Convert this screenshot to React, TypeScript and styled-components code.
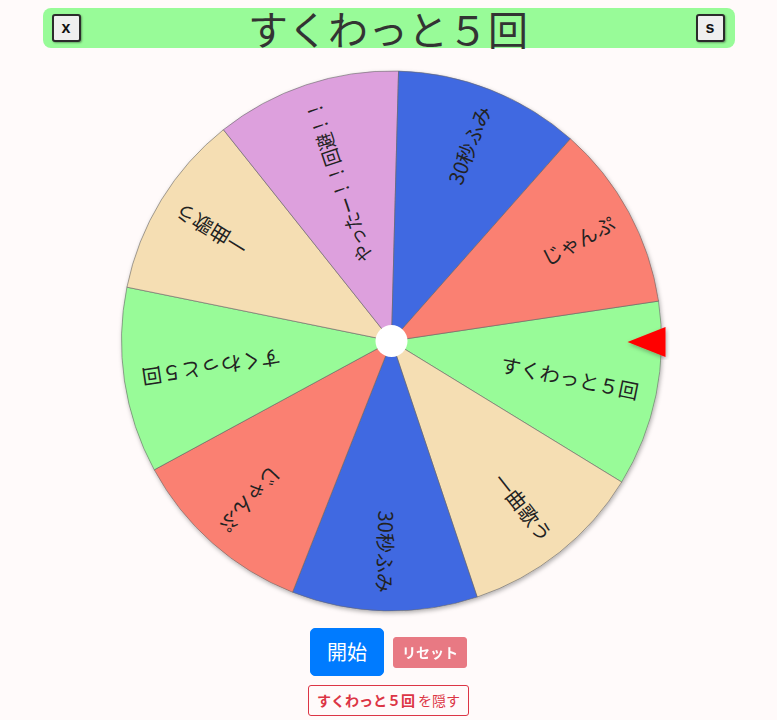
import React from "react";
import styled, { createGlobalStyle } from "styled-components";

const GlobalStyle = createGlobalStyle`
  body {
    margin: 8px;
    background: #fffafa;
    font-family: "Noto Sans CJK JP", "Noto Sans", sans-serif;
  }
`;

const Page = styled.div`
  display: flex;
  flex-direction: column;
  align-items: center;
`;

const Header = styled.header`
  width: 692px;
  height: 40px;
  box-sizing: border-box;
  padding: 0 10px 0 9px;
  background: #98fb98;
  border-radius: 8px;
  display: flex;
  align-items: center;
  justify-content: space-between;
`;

const Title = styled.h1`
  margin: 0;
  font-size: 40px;
  line-height: 40px;
  font-weight: 400;
  color: #333;
`;

const KeyButton = styled.button`
  width: 29px;
  height: 28px;
  padding: 0;
  border: 2px solid #2b2b2b;
  border-radius: 3px;
  background: #efefef;
  box-shadow: 1px 1px 2px rgba(0, 0, 0, 0.35);
  font-family: "Liberation Sans", sans-serif;
  font-weight: 700;
  font-size: 16px;
  color: #111;
`;

const WheelSvg = styled.svg`
  display: block;
  margin-top: 13px;
`;

const Controls = styled.div`
  margin-top: 7px;
  display: flex;
  flex-direction: column;
  align-items: center;
  gap: 9px;
`;

const Row = styled.div`
  display: flex;
  align-items: center;
  gap: 9px;
`;

const StartButton = styled.button`
  font-family: inherit;
  font-size: 20px;
  line-height: 1.5;
  padding: 8px 16px;
  border: 1px solid #007bff;
  border-radius: 5px;
  background: #007bff;
  color: #fff;
`;

const SmallButton = styled.button<{ $outline?: boolean }>`
  font-family: inherit;
  font-size: 14px;
  line-height: 1.5;
  padding: 4px 8px;
  border-radius: 3px;
  border: 1px solid #dc3545;
  background: ${(p) => (p.$outline ? "transparent" : "#dc3545")};
  color: ${(p) => (p.$outline ? "#dc3545" : "#fff")};
  opacity: ${(p) => (p.$outline ? 1 : 0.65)};
  font-weight: ${(p) => (p.$outline ? 400 : 700)};
`;

const Strong = styled.b`
  font-weight: 700;
`;

const slices = [
  { label: "すくわっと５回", color: "#98fb98" },
  { label: "一曲歌う", color: "#f5deb3" },
  { label: "30秒ふみ", color: "#4169e1" },
  { label: "じゃんぷ", color: "#fa8072" },
  { label: "すくわっと５回", color: "#98fb98" },
  { label: "一曲歌う", color: "#f5deb3" },
  { label: "やったー！！回避！！", color: "#dda0dd" },
  { label: "30秒ふみ", color: "#4169e1" },
  { label: "じゃんぷ", color: "#fa8072" },
];

const CX = 302.5;
const CY = 280;
const R = 270;
const START = -8.5;
const STEP = 360 / slices.length;
const FONT = 20;
const MAX_TEXT = 168; // long labels get squeezed, like canvas maxWidth

const pt = (deg: number) => {
  const a = (deg * Math.PI) / 180;
  return [CX + R * Math.cos(a), CY + R * Math.sin(a)];
};

const Wheel = () => (
  <WheelSvg width={600} height={560} viewBox="0 0 600 560">
    <defs>
      <filter id="shadow" x="-10%" y="-10%" width="120%" height="120%">
        <feDropShadow dx="1" dy="2" stdDeviation="2" floodColor="#000" floodOpacity="0.3" />
      </filter>
    </defs>
    <g filter="url(#shadow)">
      {slices.map((s, i) => {
        const a0 = START + i * STEP;
        const [x0, y0] = pt(a0);
        const [x1, y1] = pt(a0 + STEP);
        return (
          <path
            key={i}
            d={`M${CX} ${CY} L${x0} ${y0} A${R} ${R} 0 0 1 ${x1} ${y1} Z`}
            fill={s.color}
            stroke="#666"
            strokeWidth={0.6}
          />
        );
      })}
    </g>
    {slices.map((s, i) => {
      const mid = START + i * STEP + STEP / 2;
      const tooLong = [...s.label].length * FONT > MAX_TEXT;
      return (
        <text
          key={i}
          x={CX + 252}
          y={CY}
          textAnchor="end"
          dominantBaseline="central"
          fontSize={FONT}
          fill="#222"
          fontFamily='"Noto Sans CJK JP", sans-serif'
          transform={`rotate(${mid} ${CX} ${CY})`}
          textLength={tooLong ? MAX_TEXT : undefined}
          lengthAdjust={tooLong ? "spacingAndGlyphs" : undefined}
        >
          {s.label}
        </text>
      );
    })}
    <circle cx={CX} cy={CY} r={16} fill="#fff" />
    <polygon
      points={`${CX + 236},${CY + 1} ${CX + 274},${CY - 14} ${CX + 274},${CY + 16}`}
      fill="#ff0000"
      filter="url(#shadow)"
    />
  </WheelSvg>
);

export default function App() {
  return (
    <Page>
      <GlobalStyle />
      <Header>
        <KeyButton>x</KeyButton>
        <Title>すくわっと５回</Title>
        <KeyButton>s</KeyButton>
      </Header>
      <Wheel />
      <Controls>
        <Row>
          <StartButton>開始</StartButton>
          <SmallButton>リセット</SmallButton>
        </Row>
        <SmallButton $outline>
          <Strong>すくわっと５回</Strong> を隠す
        </SmallButton>
      </Controls>
    </Page>
  );
}
